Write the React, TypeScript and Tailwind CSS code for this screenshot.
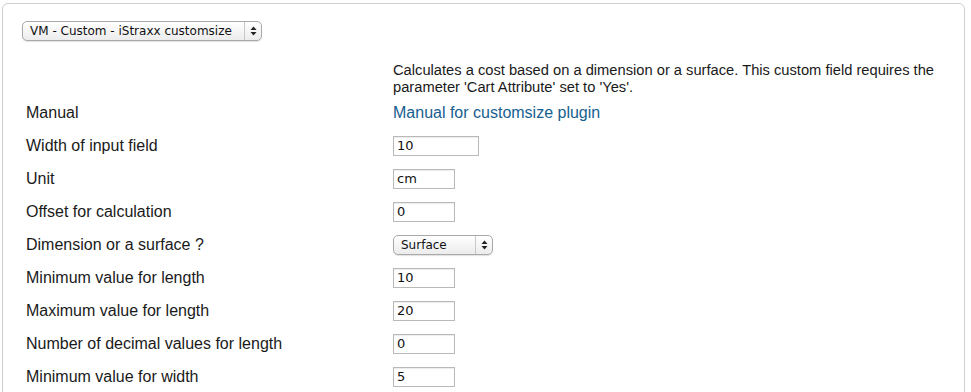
import React from "react";

const rows: { label: string; value: string; w: string; kind?: "select" }[] = [
  { label: "Width of input field", value: "10", w: "w-[86px]" },
  { label: "Unit", value: "cm", w: "w-[62px]" },
  { label: "Offset for calculation", value: "0", w: "w-[62px]" },
  { label: "Dimension or a surface ?", value: "Surface", w: "w-[100px]", kind: "select" },
  { label: "Minimum value for length", value: "10", w: "w-[62px]" },
  { label: "Maximum value for length", value: "20", w: "w-[62px]" },
  { label: "Number of decimal values for length", value: "0", w: "w-[62px]" },
  { label: "Minimum value for width", value: "5", w: "w-[62px]" },
];

function Arrows() {
  return (
    <svg width="7" height="10" viewBox="0 0 7 10" className="shrink-0">
      <path d="M3.5 0.5 L6.5 4 L0.5 4 Z" fill="#222" />
      <path d="M3.5 9.5 L6.5 6 L0.5 6 Z" fill="#222" />
    </svg>
  );
}

function MacSelect({ text, className }: { text: string; className: string }) {
  return (
    <div
      className={`flex items-center h-[20px] rounded-[5px] border border-[#a9a9a9] bg-gradient-to-b from-white to-[#ececec] shadow-[0_1px_1px_rgba(0,0,0,0.12)] ${className}`}
    >
      <span className="flex-1 pl-[7px] text-[12px] leading-none text-[#111] font-['DejaVu_Sans',sans-serif] whitespace-nowrap">
        {text}
      </span>
      <span className="flex items-center justify-center w-[17px] h-full border-l border-[#c8c8c8]">
        <Arrows />
      </span>
    </div>
  );
}

export default function App() {
  return (
    <div className="w-[971px] h-[392px] bg-white overflow-hidden font-['Liberation_Sans',Arial,sans-serif]">
      <div className="ml-[2px] mt-[3px] w-[963px] h-[420px] border border-[#cfcfcf] rounded-t-[6px]">
        <div className="pl-[19px] pt-[17px]">
          <MacSelect text="VM - Custom - iStraxx customsize" className="w-[240px]" />
        </div>
        <div className="pl-[390px] pt-[21px] pr-[18px] text-[14.7px] leading-[17px] text-[#1a1a1a]">
          Calculates a cost based on a dimension or a surface. This custom field requires the parameter 'Cart Attribute' set to 'Yes'.
        </div>
        <div className="flex items-center h-[33px] text-[16px] text-[#1a1a1a]">
          <div className="w-[390px] pl-[23px]">Manual</div>
          <a className="text-[#16608f]">Manual for customsize plugin</a>
        </div>
        {rows.map((r) => (
          <div key={r.label} className="flex items-center h-[33px] text-[16px] text-[#1a1a1a]">
            <div className="w-[390px] pl-[23px]">{r.label}</div>
            {r.kind === "select" ? (
              <MacSelect text={r.value} className={r.w} />
            ) : (
              <div
                className={`${r.w} h-[20px] border border-[#b9b9b9] shadow-[inset_0_1px_1px_rgba(0,0,0,0.08)] pl-[3px] flex items-center text-[13px] text-[#111] font-['DejaVu_Sans',sans-serif]`}
              >
                {r.value}
              </div>
            )}
          </div>
        ))}
      </div>
    </div>
  );
}
